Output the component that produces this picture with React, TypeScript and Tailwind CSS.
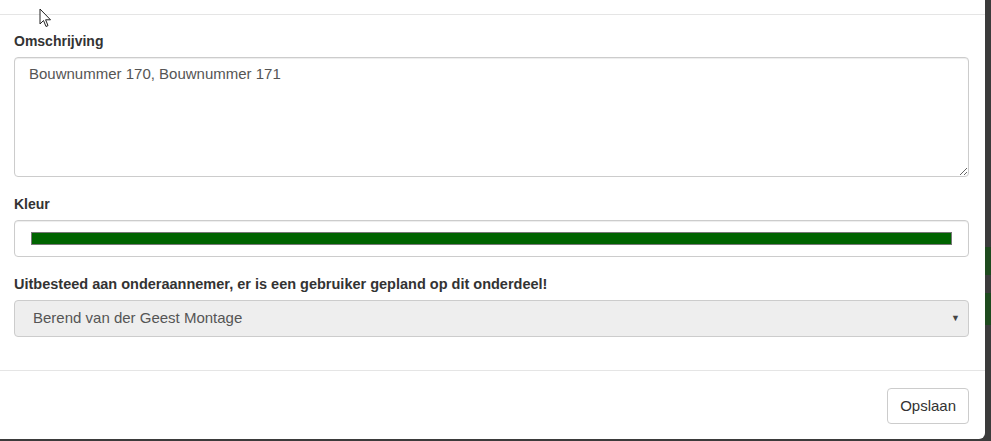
import React from "react";

const font = { fontFamily: '"Liberation Sans", Arial, Helvetica, sans-serif' };

function Cursor() {
	return (
		<svg className="absolute left-[39px] top-[8px]" width="14" height="21" viewBox="0 0 14 21">
			<path d="M1 1 L1 16 L4.5 12.5 L7 18.5 L9 17.6 L6.6 11.8 L11.5 11.8 Z" fill="#fff" stroke="#222" strokeWidth="1" strokeLinejoin="miter" />
		</svg>
	);
}

export default function App() {
	return (
		<div className="flex w-[991px] h-[441px] bg-[#3b3b3b] text-[#333]" style={font}>
			<div className="relative flex flex-col w-[985px] h-[439px] bg-white rounded-br-[6px]">
				<Cursor />
				<div className="h-[15px] border-b border-[#e5e5e5]"></div>

				<div className="flex flex-col pl-[14px] pr-[16px] pt-[16px] pb-[33px] border-b border-[#e5e5e5]">
					<label className="text-[14px] font-bold leading-[20px] mb-[6px]">Omschrijving</label>
					<textarea
						readOnly
						defaultValue="Bouwnummer 170, Bouwnummer 171"
						className="h-[120px] w-full border border-[#ccc] rounded-[4px] px-[14px] py-[6px] text-[15px] leading-[20px] text-[#555] outline-none shadow-[inset_0_1px_1px_rgba(0,0,0,0.075)]"
						style={font}
					/>

					<label className="text-[14px] font-bold leading-[20px] mt-[17px] mb-[6px]">Kleur</label>
					<div className="h-[37px] border border-[#ccc] rounded-[4px] flex items-center px-[16px] shadow-[inset_0_1px_1px_rgba(0,0,0,0.075)]">
						<div className="h-[13px] w-full bg-[#006400] border border-[#777]"></div>
					</div>

					<label className="text-[14.5px] font-bold leading-[20px] mt-[17px] mb-[6px]">
						Uitbesteed aan onderaannemer, er is een gebruiker gepland op dit onderdeel!
					</label>
					<div className="h-[37px] border border-[#ccc] rounded-[4px] bg-[#eee] flex items-center justify-between pl-[18px] pr-[8px] text-[15px] text-[#555]">
						<span>Berend van der Geest Montage</span>
						<span className="text-[9px] text-[#444]">▼</span>
					</div>
				</div>

				<div className="flex justify-end pl-[14px] pr-[16px] pt-[17px]">
					<button className="h-[36px] px-[12px] border border-[#ccc] rounded-[4px] bg-white text-[15px] text-[#333]">
						Opslaan
					</button>
				</div>
			</div>
			<div className="flex flex-col flex-1">
				<div className="h-[247px]"></div>
				<div className="h-[28px] bg-[#1e4a1e]"></div>
				<div className="h-[18px]"></div>
				<div className="h-[32px] bg-[#1e4a1e]"></div>
			</div>
		</div>
	);
}
